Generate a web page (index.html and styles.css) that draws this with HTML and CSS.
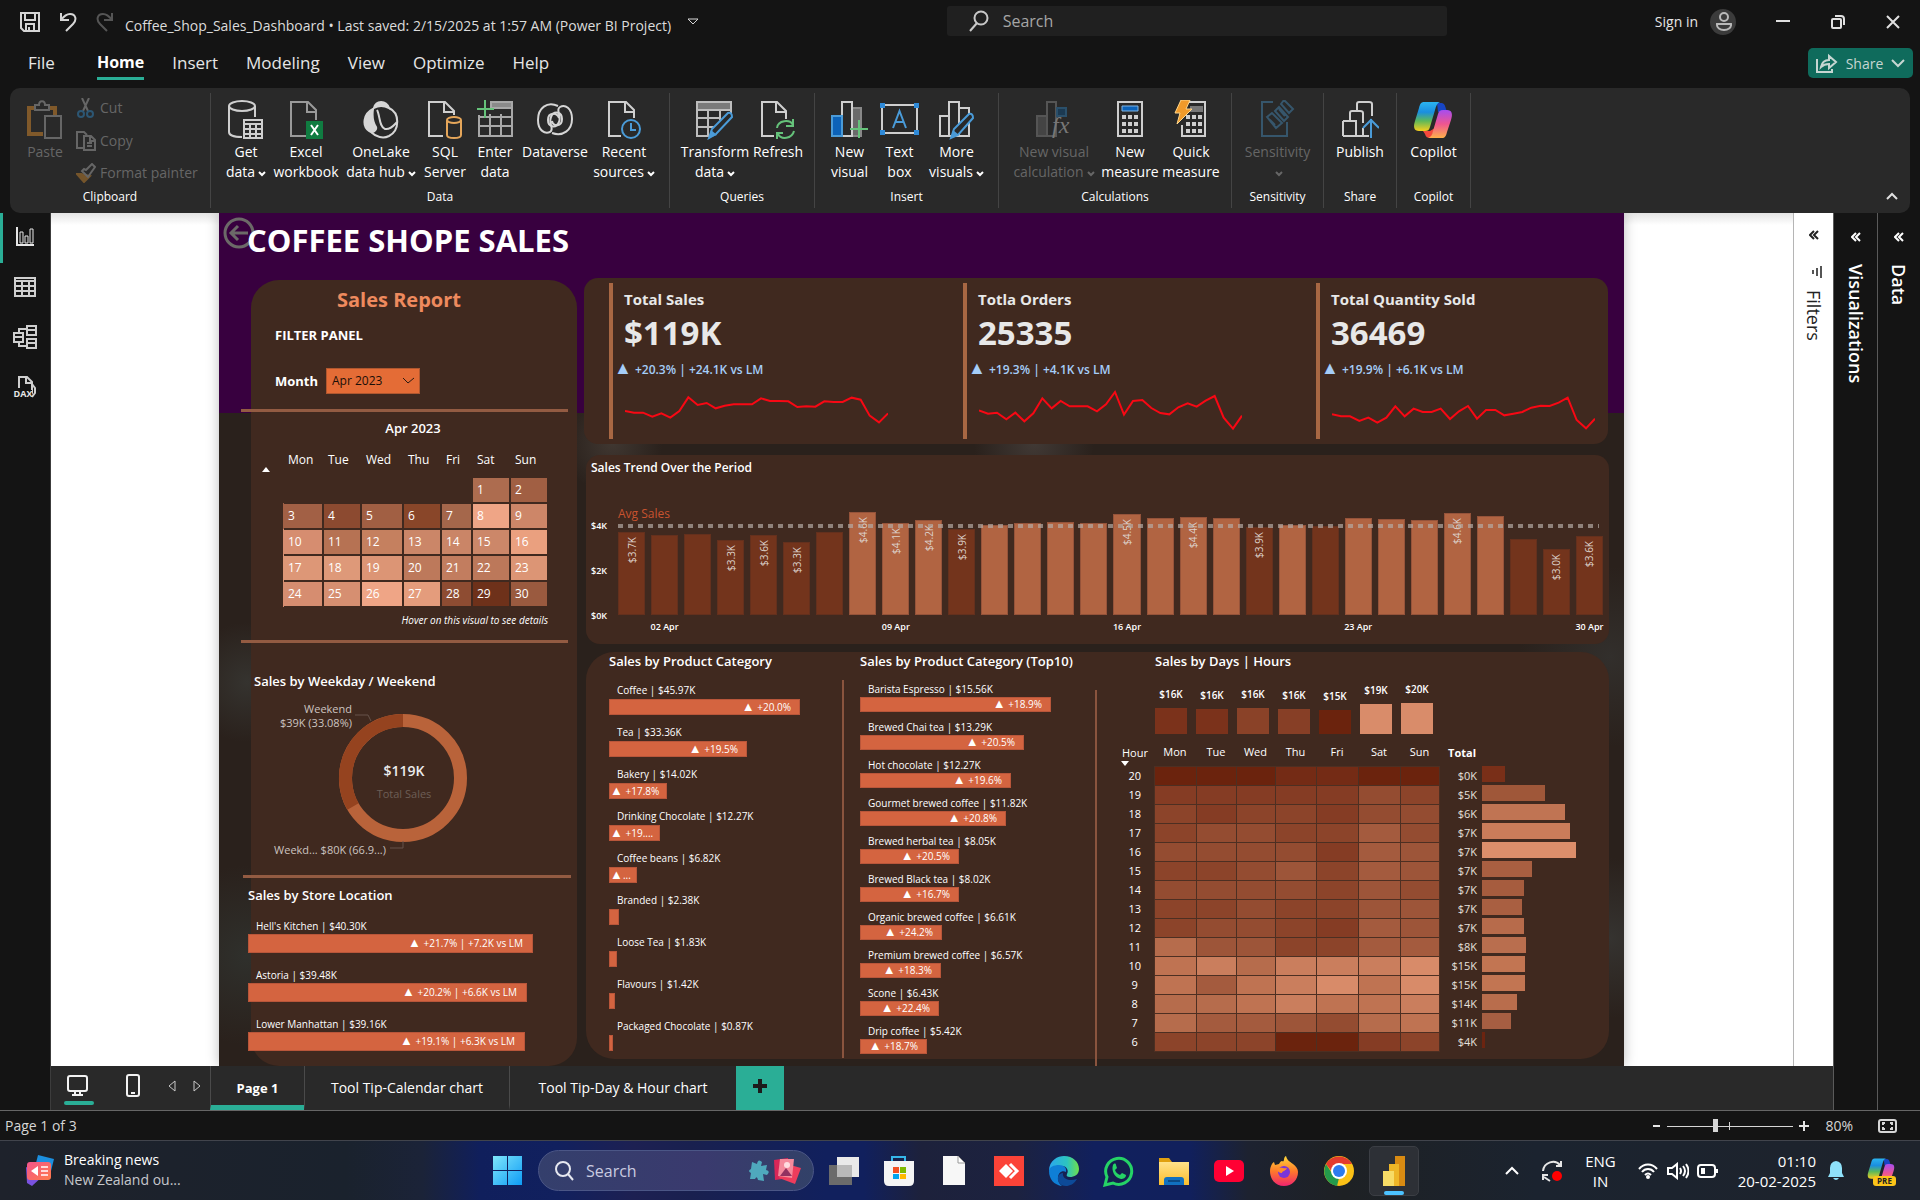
FILE: index.html
```html
<!DOCTYPE html>
<html lang="en">
<head>
<meta charset="utf-8">
<title>Coffee_Shop_Sales_Dashboard</title>
<link rel="stylesheet" href="styles.css">
</head>
<body>
<svg class="defs" width="0" height="0" aria-hidden="true">
  <defs>
    <linearGradient id="cpA" x1="0" y1="0" x2="0" y2="1"><stop offset="0" stop-color="#2bb4f0"/><stop offset=".35" stop-color="#1a8ee0"/><stop offset=".65" stop-color="#5cb85a"/><stop offset="1" stop-color="#f7cf1d"/></linearGradient>
    <linearGradient id="cpB" x1="0" y1="0" x2="0" y2="1"><stop offset="0" stop-color="#a64df0"/><stop offset=".5" stop-color="#ef5590"/><stop offset="1" stop-color="#ffb04a"/></linearGradient>
    <linearGradient id="win" x1="0" y1="0" x2="1" y2="1"><stop offset="0" stop-color="#7fe6fb"/><stop offset="1" stop-color="#0e9cf5"/></linearGradient>
    <linearGradient id="edge" x1="0" y1="0" x2="1" y2="0"><stop offset="0" stop-color="#2ba7ee"/><stop offset=".6" stop-color="#2cc4c0"/><stop offset="1" stop-color="#6fe04a"/></linearGradient>
    <linearGradient id="fox" x1="0" y1="0" x2="0" y2="1"><stop offset="0" stop-color="#ffd93a"/><stop offset=".5" stop-color="#ff7a2a"/><stop offset="1" stop-color="#f0246e"/></linearGradient>
    <linearGradient id="fold" x1="0" y1="0" x2="0" y2="1"><stop offset="0" stop-color="#ffe28a"/><stop offset="1" stop-color="#fbbd2c"/></linearGradient>
    <linearGradient id="news" x1="0" y1="0" x2="1" y2="1"><stop offset="0" stop-color="#f2548c"/><stop offset="1" stop-color="#ff7b4a"/></linearGradient>
    <symbol id="copilot" viewBox="0 0 40 40">
      <path d="M24 3h4c3 0 4 2 5 6l1 3h-9z" fill="#1745c4"/>
      <path d="M11 2h16c-3 1-4 4-5 8l-5 17c-1 3-2 4-5 4H6c-5 0-6-4-4-10L6 8c1-4 2-6 5-6z" fill="url(#cpA)"/>
      <path d="M10 31h7l5-3-4 10c-4 0-5-1-6-4z" fill="#f4483c"/>
      <path d="M29 38H15c3-1 4-3 5-7l5-17c1-3 2-4 5-4h4c5 0 6 4 4 10l-4 12c-1 4-2 6-5 6z" fill="url(#cpB)"/>
    </symbol>
    <symbol id="chev" viewBox="0 0 8 6"><path d="M1 1l3 3 3-3" fill="none" stroke="currentColor" stroke-width="2"/></symbol>
  </defs>
</svg>

<header class="titlebar">
  <div class="title-left">
    <button class="bare" aria-label="Save"><svg width="20" height="20" fill="none" stroke="#d6d6d6" stroke-width="2"><path d="M1 1h18v18H4l-3-3z"/><path d="M5 1v7h10V1M6 19v-7h8v7M9 15v4"/></svg></button>
    <button class="bare" aria-label="Undo"><svg width="18" height="20" fill="none" stroke="#d6d6d6" stroke-width="2"><path d="M2 1v7h8M2 8c3-4 6-6 9-6 6 0 7 6 3 10l-7 7"/></svg></button>
    <button class="bare" aria-label="Redo" disabled><svg width="18" height="20" fill="none" stroke="#555" stroke-width="2"><path d="M16 1v7H8M16 8c-3-4-6-6-9-6-6 0-7 6-3 10l7 7"/></svg></button>
    <h1>Coffee_Shop_Sales_Dashboard • Last saved: 2/15/2025 at 1:57 AM (Power BI Project)</h1>
    <button class="bare" aria-label="File options"><svg width="12" height="8" fill="none" stroke="#d6d6d6"><path d="M1 1h10L6 6z"/></svg></button>
  </div>
  <label class="search"><svg width="20" height="22" fill="none" stroke="#c8c8c8" stroke-width="2"><circle cx="12" cy="8" r="6.500"/><path d="M8 13l-7 8"/></svg><input type="text" placeholder="Search" aria-label="Search"></label>
  <div class="title-right">
    <button class="bare signin">Sign in <span class="avatar"><svg width="20" height="22" fill="none" stroke="#b9b9b9" stroke-width="2"><circle cx="10" cy="6" r="4"/><path d="M3 13h14c1 8-15 8-14 0z"/></svg></span></button>
    <button class="bare wbtn" aria-label="Minimize"><svg width="14" height="14"><path d="M0 6h14" stroke="#e0e0e0" stroke-width="2"/></svg></button>
    <button class="bare wbtn" aria-label="Restore"><svg width="14" height="14" fill="none" stroke="#e0e0e0" stroke-width="2"><rect x="1" y="4" width="9" height="9" rx="1"/><path d="M4 1h6q3 0 3 3v6"/></svg></button>
    <button class="bare wbtn" aria-label="Close"><svg width="14" height="14" stroke="#e0e0e0" stroke-width="2"><path d="M1 1l12 12M13 1L1 13"/></svg></button>
  </div>
</header>

<nav class="menu" aria-label="Ribbon tabs">
  <button class="first">File</button><button class="active">Home</button><button>Insert</button><button>Modeling</button><button>View</button><button>Optimize</button><button>Help</button>
  <button class="share"><svg width="22" height="20" fill="none" stroke="#c6d6d2" stroke-width="2"><path d="M1 6v13h15v-3M5 14c1-5 4-7 8-7V3l7 6-7 6v-4c-4 0-6 1-8 3z"/></svg>Share<svg width="14" height="9" fill="none" stroke="#c6d6d2" stroke-width="2"><path d="M1 1l6 6 6-6"/></svg></button>
</nav>

<section class="ribbon" aria-label="Ribbon">
  <div class="group g-clip">
    <div class="tools">
      <button class="tool" disabled><svg width="36" height="40" fill="none" stroke-width="2"><path d="M8 8H2v26h14" stroke="#80592a" stroke-width="4"/><path d="M22 8h6v7" stroke="#80592a" stroke-width="4"/><path d="M8 5h4c0-5 6-5 6 0h4v5H8z" stroke="#666" fill="#292929"/><path d="M18 16h16v22H18z" stroke="#666" fill="#292929"/></svg>Paste</button>
      <div class="small-tools">
        <button disabled><svg width="20" height="20" fill="none" stroke="#666" stroke-width="2"><path d="M6 0l6 13M13 0L7 13"/><circle cx="5" cy="16" r="3" stroke="#2c5673"/><circle cx="14" cy="16" r="3" stroke="#2c5673"/></svg>Cut</button>
        <button disabled><svg width="20" height="20" fill="none" stroke="#666" stroke-width="2"><path d="M7 17H1V1h7l3 3"/><path d="M8 5h7l4 4v10H8zM14 5v5h5M11 12h5M11 15h5"/></svg>Copy</button>
        <button disabled><svg width="20" height="20" fill="none" stroke="#666" stroke-width="2"><path d="M5 11L1 11l7 8 6-6z" fill="#75552b" stroke="#75552b"/><path d="M6 8l6 6 2-3 5-7-3-3-6 6-2-1z"/></svg>Format painter</button>
      </div>
    </div>
    <p>Clipboard</p>
  </div>
  <div class="group g-data">
    <div class="tools">
      <button class="tool"><svg width="36" height="40" fill="none" stroke="#cfcfcf" stroke-width="2"><ellipse cx="14" cy="6" rx="13" ry="5"/><path d="M1 6v26c0 3 5 5 13 5M27 6v11"/><path d="M16 20h18v18H16zM16 24h18M16 29h18M16 34h18M22 24v14M28 24v14"/></svg>Get<br>data<svg class="chev"><use href="#chev"/></svg></button>
      <button class="tool"><svg width="36" height="40" fill="none" stroke="#9a9a9a" stroke-width="2"><path d="M18 36H3V2h17l8 8v10M19 2v10h9"/><rect x="18" y="21" width="17" height="18" fill="#107c41" stroke="none"/><path d="M23 25l7 10M30 25l-7 10" stroke="#fff"/></svg>Excel<br>workbook</button>
      <button class="tool"><svg width="36" height="40" fill="none" stroke="#d6d6d6" stroke-width="2"><path d="M11 8C13 0 23 0 26 8c-6-3-10-3-15 0z" fill="#d6d6d6"/><path d="M10 9C0 14-1 26 6 31c4 3 8-1 7-4C9 21 9 16 10 9z" fill="#d6d6d6"/><path d="M26 8c11 5 11 22 0 28-6 3-13 1-18-4M14 10c3 5 2 17 8 19 6 1 9-4 12-7"/></svg>OneLake<br>data hub<svg class="chev"><use href="#chev"/></svg></button>
      <button class="tool"><svg width="36" height="40" fill="none" stroke="#cfcfcf" stroke-width="2"><path d="M16 36H2V2h16l9 9v4M17 2v10h9"/><g stroke="#e5a65a"><ellipse cx="27" cy="20" rx="7" ry="3"/><path d="M20 20v15c0 4 14 4 14 0V20"/></g></svg>SQL<br>Server</button>
      <button class="tool"><svg width="36" height="40" fill="none" stroke="#a8a8a8" stroke-width="2"><path d="M13 2h22v34H2V15M14 8h21M2 17h33M2 26h33M13 14v22M24 14v22"/><path d="M14 2h21v6H14z" fill="#8a8a8a"/><path d="M8 0v18M0 9h17" stroke="#65c27a"/></svg>Enter<br>data</button>
      <button class="tool"><svg width="36" height="40" fill="none" stroke="#d6d6d6" stroke-width="2"><path d="M21 6C10 1 1 8 1 20c0 11 7 14 12 12 5-3-2-8 1-15 3-7 11-5 11 2 0 8-9 8-10 2"/><path d="M15 33c11 4 20-3 20-14C35 8 28 4 23 7c-5 3 2 8-1 15-3 7-11 5-11-2 0-8 9-8 11-2"/></svg>Dataverse</button>
      <button class="tool"><svg width="36" height="40" fill="none" stroke="#cfcfcf" stroke-width="2"><path d="M15 36H3V2h17l8 8v8M19 2v10h9"/><g stroke="#4a9bd8"><circle cx="25" cy="29" r="9"/><path d="M25 23v7h5"/></g></svg>Recent<br>sources<svg class="chev"><use href="#chev"/></svg></button>
    </div>
    <p>Data</p>
  </div>
  <div class="group g-queries">
    <div class="tools">
      <button class="tool"><svg width="40" height="40" fill="none" stroke="#bdbdbd" stroke-width="2"><path d="M2 2h34v8H2z" fill="#7a7a7a"/><path d="M2 2v34h14M36 10v3M2 18h24M2 27h18M13 10v26M25 10v10"/><path d="M14 38l3-9 16-16q4-1 4 4L21 34z" stroke="#4a9bd8" fill="#292929"/><path d="M14 38l2-8 6 5z" fill="#4a9bd8" stroke="none"/></svg>Transform<br>data<svg class="chev"><use href="#chev"/></svg></button>
      <button class="tool"><svg width="36" height="40" fill="none" stroke="#cfcfcf" stroke-width="2"><path d="M14 36H2V2h15l9 9v8M16 2v10h9"/><g stroke="#65c27a"><path d="M17 28c1-8 13-9 16-3M33 19v7h-7M34 31c-2 8-13 9-16 3M17 39v-6h6"/></g></svg>Refresh</button>
    </div>
    <p>Queries</p>
  </div>
  <div class="group g-insert">
    <div class="tools">
      <button class="tool"><svg width="38" height="40" fill="none" stroke="#cfcfcf" stroke-width="2"><path d="M21 8h9v28h-9z" fill="#6a6a6a" stroke="#888"/><path d="M11 2h10v34H11z" fill="#292929"/><path d="M1 16h10v20H1z" fill="#0c62b8" stroke="#4a9bd8"/><path d="M28 20v18M19 29h18" stroke="#65c27a"/></svg>New<br>visual</button>
      <button class="tool"><svg width="40" height="40" fill="none" stroke="#cfcfcf" stroke-width="2"><path d="M2 5h35v28H2z"/><path d="M13 28L19.500 11 26 28M15 22h9" stroke="#4a9bd8"/><path d="M0 3h5v5H0zM34 3h5v5h-5zM0 30h5v5H0zM34 30h5v5h-5z" fill="#2f8ad8" stroke="none"/></svg>Text<br>box</button>
      <button class="tool"><svg width="38" height="40" fill="none" stroke="#cfcfcf" stroke-width="2"><path d="M2 16h9v20H2zM11 2h10v34H11zM21 8h10v28H21z"/><path d="M13 38l3-9 15-15q4-1 4 4L20 35z" stroke="#4a9bd8" fill="#292929"/><path d="M13 38l2-8 6 5z" fill="#4a9bd8" stroke="none"/></svg>More<br>visuals<svg class="chev"><use href="#chev"/></svg></button>
    </div>
    <p>Insert</p>
  </div>
  <div class="group g-calc">
    <div class="tools">
      <button class="tool" disabled><svg width="38" height="40" fill="none" stroke="#555" stroke-width="2"><path d="M2 16h10v20H2z" fill="#444"/><path d="M12 2h9v34h-9z"/><path d="M22 8h9v8h-9z" fill="#1c3a52" stroke="#2b506b"/><text x="17" y="33" font-family="Liberation Serif, serif" font-style="italic" font-size="24" fill="#777" stroke="none">fx</text></svg>New visual<br>calculation<svg class="chev"><use href="#chev"/></svg></button>
      <button class="tool"><svg width="28" height="40" fill="none" stroke="#cfcfcf" stroke-width="2"><path d="M2 2h24v34H2z"/><path d="M6 6h16v5H6z" fill="#0c62b8" stroke="#7fb4e4" stroke-width="1"/><path d="M6 17h16M6 24h16M6 31h16" stroke-width="4" stroke-dasharray="4 2"/></svg>New<br>measure</button>
      <button class="tool"><svg width="34" height="40" fill="none" stroke="#cfcfcf" stroke-width="2"><path d="M15 2h16v34H8V25"/><path d="M17 7h11v4H17z" fill="#777" stroke="#777"/><path d="M12 17h17M12 24h17M12 31h17" stroke-width="4" stroke-dasharray="4 2"/><path d="M7 0h9l-4 9h6L3 24l3-11H1z" fill="#f09a2a" stroke="#ffd68a" stroke-width="1"/></svg>Quick<br>measure</button>
    </div>
    <p>Calculations</p>
  </div>
  <div class="group g-sens">
    <div class="tools">
      <button class="tool" disabled><svg width="36" height="40" fill="none" stroke="#36566c" stroke-width="2"><path d="M14 2H3v34h25V22"/><path d="M8 17l5-4 10 10-6 5zM16 11l4-4 9 10-4 4zM22 4l3-4 9 9-4 4zM11 20l5 5M20 9l6 7"/></svg>Sensitivity<br><svg class="chev"><use href="#chev"/></svg></button>
    </div>
    <p>Sensitivity</p>
  </div>
  <div class="group g-pub">
    <div class="tools">
      <button class="tool"><svg width="38" height="40" fill="none" stroke="#cfcfcf" stroke-width="2"><path d="M2 21h13v15M2 36V21M2 36h26M9 20v-7q0-2 2-2h8q3 0 3 2v10M16 11V4q0-2 2-2h10q3 0 3 2v12M22 28v8"/><path d="M30 38V19M22 28l8-8 8 8" stroke="#4a9bd8"/></svg>Publish</button>
    </div>
    <p>Share</p>
  </div>
  <div class="group g-cop">
    <div class="tools">
      <button class="tool"><svg width="40" height="40"><use href="#copilot"/></svg>Copilot</button>
    </div>
    <p>Copilot</p>
  </div>
  <button class="bare collapse" aria-label="Collapse ribbon"><svg width="12" height="8" fill="none" stroke="#e0e0e0" stroke-width="2"><path d="M1 7l5-5 5 5"/></svg></button>
</section>

<main class="work">
  <nav class="rail" aria-label="Views">
    <button class="on" aria-label="Report view"><svg width="18" height="20" fill="none" stroke="#e6e6e6" stroke-width="2"><path d="M1 0v18h17"/><path d="M4 5h3v11H4zM9 9h3v7H9zM14 2h3v14h-3z" stroke-width="1"/></svg></button>
    <button aria-label="Table view"><svg width="22" height="20" fill="none" stroke="#cfcfcf" stroke-width="2"><path d="M1 1h20v18H1zM1 4h20M1 9h20M1 14h20M8 4v15M15 4v15"/></svg></button>
    <button aria-label="Model view"><svg width="24" height="24" fill="none" stroke="#cfcfcf" stroke-width="2"><path d="M1 8h9v9H1zM14 1h9v9h-9zM14 14h9v9h-9zM6 8V4h8M6 17v4h8M1 12h9M14 5h9M14 18h9"/></svg></button>
    <button class="dax" aria-label="DAX query view"><svg width="22" height="22" fill="none" stroke="#cfcfcf" stroke-width="2"><path d="M5 12V1h8l5 5v11l-2 3M12 1v6h6M18 8l3 4v5l-3 4"/></svg><span>DAX</span></button>
  </nav>

  <div class="center">
    <div class="stage">
      <div class="canvas">
        <article class="page">
          <header class="page-head">
            <button class="bare back" aria-label="Back"><svg width="32" height="32" fill="none" stroke="#6c6a68" stroke-width="3"><circle cx="16" cy="16" r="14"/><path d="M25 16H8M15 9l-7 7 7 7"/></svg></button>
            <h2>COFFEE SHOPE SALES</h2>
          </header>

          <aside class="panel">
            <h3 class="report">Sales Report</h3>
            <h4 class="filter">FILTER PANEL</h4>
            <div class="month">
              <label for="month">Month</label>
              <span class="pick"><select id="month"><option>Apr 2023</option></select><svg width="13" height="8" fill="none" stroke="#2a1a12"><path d="M1 1l5 5 6-5"/></svg></span>
            </div>
            <hr>
            <table class="cal">
              <caption>Apr 2023</caption>
              <colgroup><col class="c31"><col class="c40"><col class="c38"><col class="c42"><col class="c38"><col class="c31"><col class="c38"><col class="c38"></colgroup>
              <thead><tr><th class="sort"><i class="up"></i></th><th>Mon</th><th>Tue</th><th>Wed</th><th>Thu</th><th>Fri</th><th>Sat</th><th>Sun</th></tr></thead>
              <tbody>
              <tr><td></td><td></td><td></td><td></td><td></td><td></td><td style="background:#ad6c4f">1</td><td style="background:#a15f43">2</td></tr>
              <tr><td></td><td style="background:#a26045">3</td><td style="background:#8c4a30">4</td><td style="background:#a15f43">5</td><td style="background:#894629">6</td><td style="background:#a5674b">7</td><td style="background:#efa586">8</td><td style="background:#cd8668">9</td></tr>
              <tr><td></td><td style="background:#d68d70">10</td><td style="background:#b67253">11</td><td style="background:#c5805f">12</td><td style="background:#cb8668">13</td><td style="background:#ca8567">14</td><td style="background:#cc8769">15</td><td style="background:#eaa07f">16</td></tr>
              <tr><td></td><td style="background:#dd9777">17</td><td style="background:#de9979">18</td><td style="background:#dc9575">19</td><td style="background:#bd795b">20</td><td style="background:#c27d5f">21</td><td style="background:#bc785a">22</td><td style="background:#dc9575">23</td></tr>
              <tr><td></td><td style="background:#d68d70">24</td><td style="background:#d68f71">25</td><td style="background:#efa586">26</td><td style="background:#e49c7c">27</td><td style="background:#8e4c32">28</td><td style="background:#6e311a">29</td><td style="background:#9a5a3f">30</td></tr>
              </tbody>
            </table>
            <p class="note">Hover on this visual to see details</p>
            <hr>
            <h4 class="weekend">Sales by Weekday / Weekend</h4>
            <svg class="donut" viewBox="0 0 326 170" width="326" height="170">
              <circle cx="152" cy="84" r="57.500" fill="none" stroke="#b9633a" stroke-width="13"/>
              <path d="M152 26.500A57.500 57.500 0 0 0 102 112.500" fill="none" stroke="#95431f" stroke-width="13"/>
              <path d="M104 21h13l3 6M139 154h13v-7" fill="none" stroke="#66534a"/>
              <text x="101" y="19" text-anchor="end">Weekend</text>
              <text x="101" y="33" text-anchor="end">$39K (33.08%)</text>
              <text x="135" y="160" text-anchor="end">Weekd... $80K (66.9...)</text>
              <text class="big" x="153" y="82" text-anchor="middle">$119K</text>
              <text class="dim" x="153" y="104" text-anchor="middle">Total Sales</text>
            </svg>
            <hr class="last">
            <section class="stores">
              <h4>Sales by Store Location</h4>
              <ul class="bars">
                <li>Hell's Kitchen | $40.30K<div style="width:285px"><i>▲</i> +21.7% | +7.2K vs LM</div></li>
                <li>Astoria | $39.48K<div style="width:279px"><i>▲</i> +20.2% | +6.6K vs LM</div></li>
                <li>Lower Manhattan | $39.16K<div style="width:277px"><i>▲</i> +19.1% | +6.3K vs LM</div></li>
              </ul>
            </section>
          </aside>

          <div class="charts">
            <section class="kpis">
              <div class="kpi"><h3>Total Sales</h3><strong>$119K</strong><p><i>▲</i> +20.3% | +24.1K vs LM</p>
                <svg viewBox="0 351 789 156" width="263" height="52"><polyline points="0,423 27,428 54,428 82,440 109,430 136,443 163,423 190,382 218,405 245,399 272,415 299,407 326,403 354,403 381,403 408,385 435,393 462,393 490,394 517,411 544,409 571,410 598,394 626,396 653,396 680,383 707,389 734,437 762,457 789,430"/></svg></div>
              <div class="kpi"><h3>Totla Orders</h3><strong>25335</strong><p><i>▲</i> +19.3% | +4.1K vs LM</p>
                <svg viewBox="0 351 789 156" width="263" height="52"><polyline points="0,421 27,431 54,428 82,448 109,428 136,454 163,430 190,385 218,415 245,393 272,409 299,409 326,409 354,424 381,403 408,366 435,434 462,393 490,390 517,414 544,429 571,433 598,412 626,400 653,410 680,392 707,378 734,443 762,476 789,437"/></svg></div>
              <div class="kpi"><h3>Total Quantity Sold</h3><strong>36469</strong><p><i>▲</i> +19.9% | +6.1K vs LM</p>
                <svg viewBox="0 351 789 156" width="263" height="52"><polyline points="0,433 27,439 54,439 82,453 109,443 136,458 163,443 190,409 218,439 245,416 272,426 299,426 326,416 354,447 381,424 408,408 435,446 462,420 490,420 517,436 544,431 571,426 598,413 626,407 653,408 680,398 707,383 734,450 762,475 789,446"/></svg></div>
            </section>

            <section class="trend">
              <h4>Sales Trend Over the Period</h4>
              <div class="plotrow">
                <div class="yaxis"><span>$4K</span><span>$2K</span><span>$0K</span></div>
                <div class="plot">
                  <span class="avg">Avg Sales</span>
                  <i class="lo" style="height:83px"><b>$3.7K</b></i><i class="lo" style="height:80px"></i><i class="lo" style="height:81px"></i><i class="lo" style="height:75px"><b>$3.3K</b></i><i class="lo" style="height:80px"><b>$3.6K</b></i><i class="lo" style="height:73px"><b>$3.3K</b></i><i class="lo" style="height:83px"></i><i style="height:103px"><b>$4.6K</b></i><i style="height:92px"><b>$4.1K</b></i><i style="height:95px"><b>$4.2K</b></i><i class="lo" style="height:86px"><b>$3.9K</b></i><i style="height:90px"></i><i style="height:92px"></i><i style="height:93px"></i><i style="height:92px"></i><i style="height:101px"><b>$4.5K</b></i><i style="height:97px"></i><i style="height:98px"><b>$4.4K</b></i><i style="height:97px"></i><i class="lo" style="height:88px"><b>$3.9K</b></i><i style="height:90px"></i><i class="lo" style="height:89px"></i><i style="height:97px"></i><i style="height:96px"></i><i style="height:95px"></i><i style="height:102px"><b>$4.6K</b></i><i style="height:99px"></i><i class="lo" style="height:76px"></i><i class="lo" style="height:66px"><b>$3.0K</b></i><i class="lo" style="height:79px"><b>$3.6K</b></i>
                  <span class="avgline"></span>
                </div>
              </div>
              <div class="xaxis"><span class="d2">02 Apr</span><span class="d9">09 Apr</span><span class="d16">16 Apr</span><span class="d23">23 Apr</span><span class="d30">30 Apr</span></div>
            </section>

            <section class="details">
              <div class="cat">
                <h4>Sales by Product Category</h4>
                <ul class="bars">
                  <li>Coffee | $45.97K<div style="width:191px"><i>▲</i> +20.0%</div></li>
                  <li>Tea | $33.36K<div style="width:138px"><i>▲</i> +19.5%</div></li>
                  <li>Bakery | $14.02K<div style="width:58px"><i>▲</i> +17.8%</div></li>
                  <li>Drinking Chocolate | $12.27K<div style="width:51px"><i>▲</i> +19....</div></li>
                  <li>Coffee beans | $6.82K<div style="width:28px"><i>▲</i>...</div></li>
                  <li>Branded | $2.38K<div class="tiny" style="width:10px"></div></li>
                  <li>Loose Tea | $1.83K<div class="tiny" style="width:8px"></div></li>
                  <li>Flavours | $1.42K<div class="tiny" style="width:6px"></div></li>
                  <li>Packaged Chocolate | $0.87K<div class="tiny" style="width:4px"></div></li>
                </ul>
              </div>
              <span class="divider"></span>
              <div class="top10">
                <h4>Sales by Product Category (Top10)</h4>
                <ul class="bars">
                  <li>Barista Espresso | $15.56K<div style="width:191px"><i>▲</i> +18.9%</div></li>
                  <li>Brewed Chai tea | $13.29K<div style="width:164px"><i>▲</i> +20.5%</div></li>
                  <li>Hot chocolate | $12.27K<div style="width:151px"><i>▲</i> +19.6%</div></li>
                  <li>Gourmet brewed coffee | $11.82K<div style="width:146px"><i>▲</i> +20.8%</div></li>
                  <li>Brewed herbal tea | $8.05K<div style="width:99px"><i>▲</i> +20.5%</div></li>
                  <li>Brewed Black tea | $8.02K<div style="width:99px"><i>▲</i> +16.7%</div></li>
                  <li>Organic brewed coffee | $6.61K<div style="width:82px"><i>▲</i> +24.2%</div></li>
                  <li>Premium brewed coffee | $6.57K<div style="width:81px"><i>▲</i> +18.3%</div></li>
                  <li>Scone | $6.43K<div style="width:79px"><i>▲</i> +22.4%</div></li>
                  <li>Drip coffee | $5.42K<div style="width:67px"><i>▲</i> +18.7%</div></li>
                </ul>
              </div>
              <span class="divider long"></span>
              <div class="hours">
                <h4>Sales by Days | Hours</h4>
                <div class="days">
                  <span>$16K<i style="height:26px;background:#7b321b"></i></span><span>$16K<i style="height:25px;background:#7b321b"></i></span><span>$16K<i style="height:26px;background:#8a4228"></i></span><span>$16K<i style="height:25px;background:#873f26"></i></span><span>$15K<i style="height:24px;background:#6b230d"></i></span><span>$19K<i style="height:30px;background:#d98c6a"></i></span><span>$20K<i style="height:31px;background:#d98c6a"></i></span>
                </div>
                <table class="heat">
                  <colgroup><col class="c57"><col class="c42"><col class="c40"><col class="c39"><col class="c41"><col class="c42"><col class="c42"><col class="c39"><col class="c43"><col></colgroup>
                  <thead><tr><th class="hr">Hour<i class="down"></i></th><th>Mon</th><th>Tue</th><th>Wed</th><th>Thu</th><th>Fri</th><th>Sat</th><th>Sun</th><th class="tot">Total</th><th></th></tr></thead>
                  <tbody>
                  <tr><th>20</th><td class="h0"></td><td class="h0"></td><td class="h0"></td><td class="h1"></td><td class="h1"></td><td class="h0"></td><td class="h0"></td><td class="sum">$0K</td><td class="bar"><i style="width:23px;background:#792f18"></i></td></tr>
                  <tr><th>19</th><td class="h2"></td><td class="h2"></td><td class="h2"></td><td class="h2"></td><td class="h2"></td><td class="h4"></td><td class="h3"></td><td class="sum">$5K</td><td class="bar"><i style="width:63px;background:#9f5739"></i></td></tr>
                  <tr><th>18</th><td class="h3"></td><td class="h2"></td><td class="h3"></td><td class="h3"></td><td class="h2"></td><td class="h4"></td><td class="h4"></td><td class="sum">$6K</td><td class="bar"><i style="width:83px;background:#c07453"></i></td></tr>
                  <tr><th>17</th><td class="h3"></td><td class="h4"></td><td class="h4"></td><td class="h3"></td><td class="h3"></td><td class="h6"></td><td class="h4"></td><td class="sum">$7K</td><td class="bar"><i style="width:88px;background:#ca7c5a"></i></td></tr>
                  <tr><th>16</th><td class="h4"></td><td class="h4"></td><td class="h4"></td><td class="h4"></td><td class="h2"></td><td class="h6"></td><td class="h5"></td><td class="sum">$7K</td><td class="bar"><i style="width:94px;background:#dc8e6b"></i></td></tr>
                  <tr><th>15</th><td class="h3"></td><td class="h3"></td><td class="h4"></td><td class="h5"></td><td class="h3"></td><td class="h6"></td><td class="h5"></td><td class="sum">$7K</td><td class="bar"><i style="width:50px;background:#a95f41"></i></td></tr>
                  <tr><th>14</th><td class="h4"></td><td class="h4"></td><td class="h4"></td><td class="h4"></td><td class="h3"></td><td class="h5"></td><td class="h4"></td><td class="sum">$7K</td><td class="bar"><i style="width:42px;background:#a65c3e"></i></td></tr>
                  <tr><th>13</th><td class="h3"></td><td class="h3"></td><td class="h4"></td><td class="h3"></td><td class="h3"></td><td class="h5"></td><td class="h5"></td><td class="sum">$7K</td><td class="bar"><i style="width:40px;background:#a95f41"></i></td></tr>
                  <tr><th>12</th><td class="h3"></td><td class="h4"></td><td class="h4"></td><td class="h3"></td><td class="h2"></td><td class="h6"></td><td class="h5"></td><td class="sum">$7K</td><td class="bar"><i style="width:42px;background:#b76b4b"></i></td></tr>
                  <tr><th>11</th><td class="h7"></td><td class="h5"></td><td class="h5"></td><td class="h3"></td><td class="h3"></td><td class="h6"></td><td class="h6"></td><td class="sum">$8K</td><td class="bar"><i style="width:44px;background:#b96e4e"></i></td></tr>
                  <tr><th>10</th><td class="h8"></td><td class="h9"></td><td class="h7"></td><td class="h9"></td><td class="h9"></td><td class="h9"></td><td class="h10"></td><td class="sum">$15K</td><td class="bar"><i style="width:43px;background:#c27552"></i></td></tr>
                  <tr><th>9</th><td class="h8"></td><td class="h6"></td><td class="h8"></td><td class="h9"></td><td class="h10"></td><td class="h8"></td><td class="h10"></td><td class="sum">$15K</td><td class="bar"><i style="width:43px;background:#c27552"></i></td></tr>
                  <tr><th>8</th><td class="h7"></td><td class="h7"></td><td class="h8"></td><td class="h9"></td><td class="h8"></td><td class="h8"></td><td class="h9"></td><td class="sum">$14K</td><td class="bar"><i style="width:35px;background:#b96d4c"></i></td></tr>
                  <tr><th>7</th><td class="h7"></td><td class="h6"></td><td class="h6"></td><td class="h5"></td><td class="h4"></td><td class="h7"></td><td class="h8"></td><td class="sum">$11K</td><td class="bar"><i style="width:29px;background:#a65e42"></i></td></tr>
                  <tr><th>6</th><td class="h3"></td><td class="h3"></td><td class="h3"></td><td class="h0"></td><td class="h0"></td><td class="h2"></td><td class="h3"></td><td class="sum">$4K</td><td class="bar"><i style="width:3px;background:#6c2410"></i></td></tr>
                  </tbody>
                </table>
              </div>
            </section>
          </div>
        </article>
      </div>
      <aside class="filters">
        <button class="bare" aria-label="Expand filters"><svg width="10" height="10" fill="none" stroke="#222" stroke-width="2"><path d="M5 1L1 5l4 4M9 1L5 5l4 4"/></svg></button>
        <svg class="funnel" width="12" height="12" stroke="#555" stroke-width="2"><path d="M11 0v12M7 2v8M3 4v4"/></svg>
        <span>Filters</span>
      </aside>
    </div>
    <footer class="pagetabs">
      <button class="bare desk" aria-label="Desktop layout"><svg width="22" height="22" fill="none" stroke="#f2f2f2" stroke-width="2"><rect x="1" y="1" width="19" height="15" rx="2"/><path d="M8 16v4M13 16v4M5 20h11"/></svg></button>
      <button class="bare phone" aria-label="Mobile layout"><svg width="14" height="24" fill="none" stroke="#f2f2f2" stroke-width="2"><rect x="1" y="1" width="12" height="21" rx="2"/><path d="M5 19h4"/></svg></button>
      <button class="bare prev" aria-label="Previous page"><svg width="8" height="12" fill="none" stroke="#c8c8c8"><path d="M7 1v10L1 6z"/></svg></button>
      <button class="bare next" aria-label="Next page"><svg width="8" height="12" fill="none" stroke="#c8c8c8"><path d="M1 1v10l6-5z"/></svg></button>
      <button class="tab current">Page 1</button>
      <button class="tab t2">Tool Tip-Calendar chart</button>
      <button class="tab t3">Tool Tip-Day &amp; Hour chart</button>
      <button class="add" aria-label="New page"><svg width="14" height="14" stroke="#1c1c1c" stroke-width="4"><path d="M7 0v14M0 7h14"/></svg></button>
    </footer>
  </div>

  <aside class="pane"><button class="bare" aria-label="Expand"><svg width="10" height="10" fill="none" stroke="#fff" stroke-width="2"><path d="M5 1L1 5l4 4M9 1L5 5l4 4"/></svg></button><span>Visualizations</span></aside>
  <aside class="pane narrow"><button class="bare" aria-label="Expand"><svg width="10" height="10" fill="none" stroke="#fff" stroke-width="2"><path d="M5 1L1 5l4 4M9 1L5 5l4 4"/></svg></button><span>Data</span></aside>
</main>

<div class="status">
  <span class="where">Page 1 of 3</span>
  <button class="bare" aria-label="Zoom out"><svg width="8" height="14"><path d="M0 7h7" stroke="#e6e6e6" stroke-width="2"/></svg></button>
  <input type="range" min="0" max="100" value="38" aria-label="Zoom">
  <button class="bare" aria-label="Zoom in"><svg width="10" height="14"><path d="M0 7h10M5 2v10" stroke="#e6e6e6" stroke-width="2"/></svg></button>
  <span class="pct">80%</span>
  <button class="bare" aria-label="Fit to page"><svg width="20" height="14" fill="none" stroke="#d6d6d6" stroke-width="2"><rect x="1" y="1" width="17" height="12" rx="2"/><path d="M7 4H5v2M5 8v2h2M12 4h2v2M14 8v2h-2"/></svg></button>
</div>

<footer class="taskbar">
  <div class="widgets">
    <svg width="32" height="34"><path d="M14 2l16 4-4 16-16-4z" fill="#1c8fe0"/><path d="M2 14l18 8-12 11-5-3z" fill="#7a52e0"/><rect x="3" y="9" width="24" height="18" rx="3" fill="url(#news)"/><path d="M7 18l7-5v10z" fill="#fff"/><path d="M17 14h7M17 18h7M17 22h7" stroke="#ffd9d9" stroke-width="2"/></svg>
    <div><b>Breaking news</b><span>New Zealand ou...</span></div>
  </div>
  <div class="apps">
    <button class="bare app start" aria-label="Start"><svg width="30" height="30"><path d="M0 0h14v14H0zM15 0h14v14H15zM0 15h14v14H0zM15 15h14v14H15z" fill="url(#win)"/></svg></button>
    <label class="tsearch"><svg width="20" height="20" fill="none" stroke="#e6e8f0" stroke-width="2"><circle cx="9" cy="8" r="7"/><path d="M14 13l5 6"/></svg><input type="text" placeholder="Search" aria-label="Taskbar search">
      <svg width="54" height="30"><path d="M3 6l5 2q1-6 5-2l-1 4 6-1-1 5q5 1 1 5l-4-1 1 7-6-1q-1-5-3-1l-5 0 1-6q-4-2 0-4z" fill="#4fa9bd"/><path d="M25 4l14-2 2 20-15 2z" fill="#d92658"/><path d="M34 7l18 5-6 16-16-6z" fill="#ee3c5c"/><path d="M31 3h14l-2 19-14-2z" fill="#f58a9c"/><circle cx="38" cy="9" r="3" fill="#ffdce0"/><path d="M31 20l6-8 6 8z" fill="#933261"/></svg></label>
    <button class="bare app" aria-label="Task view"><svg width="32" height="32"><path d="M1 10h23v20H1z" fill="#6b6b6b"/><path d="M9 2h22v20H9z" fill="#e9e9e9"/><path d="M9 10h15v12H9z" fill="#b9b9b9"/></svg></button>
    <button class="bare app" aria-label="Store"><svg width="32" height="32"><path d="M9 6V2h13v4" fill="none" stroke="#35b6ea" stroke-width="2"/><path d="M1 6h30v20q0 5-5 5H6q-5 0-5-5z" fill="#f4f4f4"/><path d="M10 12h6v6h-6z" fill="#f25022"/><path d="M17 12h6v6h-6z" fill="#7fba00"/><path d="M10 19h6v5h-6z" fill="#00a4ef"/><path d="M17 19h6v5h-6z" fill="#ffb900"/></svg></button>
    <button class="bare app" aria-label="Document"><svg width="24" height="32"><path d="M1 1h15l7 7v22H1z" fill="#f7f7f7"/><path d="M16 1v7h7z" fill="#fff" stroke="#999"/></svg></button>
    <button class="bare app" aria-label="AnyDesk"><svg width="30" height="30"><path d="M0 0h30v30H0z" fill="#fb4338"/><path d="M5 15l7-7 7 7-7 7z" fill="#fff"/><path d="M16 8l7 7-7 7" fill="none" stroke="#fff" stroke-width="3"/></svg></button>
    <button class="bare app" aria-label="Edge"><svg width="32" height="32"><path d="M1 16C1 5 10 1 16 1c9 0 15 6 15 13 0 6-5 8-9 8-3 0-4-1-3-3 2-3 0-8-5-8C7 11 2 14 1 16z" fill="url(#edge)"/><path d="M1 16c0-4 5-6 10-6 5 0 8 3 7 7-4-2-8 1-8 6 0 3 1 6 4 8C6 30 1 24 1 16z" fill="#0f7fd6"/><path d="M18 31c-6 0-9-5-8-9 1-3 3-4 5-4-1 5 5 9 14 6-3 5-7 7-11 7z" fill="#0d4a98"/></svg></button>
    <button class="bare app" aria-label="WhatsApp"><svg width="32" height="32"><path d="M2 30l2-8A13 13 0 1 1 10 28z" fill="#14204f" stroke="#25d366" stroke-width="3"/><path d="M10 10c1-2 3-2 3 0l1 3-2 2c1 3 3 4 5 5l2-2 4 2c0 3-3 4-5 4-6-1-10-8-8-14z" fill="#25d366"/></svg></button>
    <button class="bare app" aria-label="File Explorer"><svg width="32" height="32"><path d="M1 3h10l3 4v6H1z" fill="#e0a010"/><path d="M1 7h30v23H1z" fill="url(#fold)"/><path d="M6 30v-5q0-3 3-3h14q3 0 3 3v5z" fill="#1170c0"/><path d="M10 26h12" stroke="#0b4a86" stroke-width="2"/></svg></button>
    <button class="bare app" aria-label="YouTube"><svg width="32" height="32"><rect x="1" y="5" width="30" height="22" rx="5" fill="#ff0033"/><path d="M13 11l8 5-8 5z" fill="#fff"/></svg></button>
    <button class="bare app" aria-label="Firefox"><svg width="32" height="32"><path d="M16 31C7 31 2 24 2 16c0-4 2-8 4-9l1 3 4-1c1-2 2-3 3-3 3 2 1-4 4-5 1 4 3 5 7 8 3 2 5 5 5 8 0 8-6 14-14 14z" fill="url(#fox)"/><circle cx="16" cy="17" r="6" fill="#7a35d8"/><path d="M9 14c4-3 6 0 10-1-1 3-5 3-5 5-3 0-5-2-5-4z" fill="#ff8b2c"/></svg></button>
    <button class="bare app" aria-label="Chrome"><svg width="32" height="32"><circle cx="16" cy="16" r="15" fill="#fbc116"/><path d="M3 9A15 15 0 0 1 29 9H16z" fill="#e33b2e"/><path d="M3 9l7 11 6 3-2 8A15 15 0 0 1 3 9z" fill="#249a4b"/><path d="M3 9l13-1-6 10z" fill="#e33b2e"/><circle cx="16" cy="16" r="8" fill="#fff"/><circle cx="16" cy="16" r="6" fill="#2d7bee"/></svg></button>
    <button class="bare app on" aria-label="Power BI"><svg width="24" height="32"><path d="M13 1h10v30H13z" fill="#d98b12"/><path d="M7 9h10v22H7z" fill="#eeb627"/><path d="M1 16h11v15H1z" fill="#f7dc66"/></svg></button>
  </div>
  <div class="tray">
    <button class="bare" aria-label="Show hidden icons"><svg width="14" height="10" fill="none" stroke="#fff" stroke-width="2"><path d="M1 8l6-6 6 6"/></svg></button>
    <svg class="sync" width="22" height="22" fill="none" stroke="#e6e6e6" stroke-width="2"><path d="M2 11C3 2 14-1 19 5M20 1v5h-5M2 20v-5h5M3 17l6 4"/><circle cx="16" cy="16" r="5" fill="#f00" stroke="none"/></svg>
    <span class="lang">ENG<br>IN</span>
    <svg width="20" height="16" fill="none" stroke="#fff" stroke-width="2"><path d="M1 6c5-6 13-6 18 0M4 9c3-4 9-4 12 0M7 12c2-2 4-2 6 0"/><circle cx="10" cy="14" r="2" fill="#fff" stroke="none"/></svg>
    <svg class="vol" width="22" height="18" fill="none" stroke="#fff" stroke-width="2"><path d="M1 6h4l5-4v14l-5-4H1zM13 6q2 3 0 6M16 4q4 5 0 10M19 2q5 7 0 14"/></svg>
    <svg class="bat" width="22" height="14" fill="none" stroke="#fff" stroke-width="2"><rect x="1" y="1" width="17" height="12" rx="3"/><path d="M20 5v4"/><path d="M4 4h4v6H4z" fill="#fff" stroke="none"/></svg>
    <span class="clock">01:10<br>20-02-2025</span>
    <svg class="bell" width="16" height="20" fill="#8fe2fb"><path d="M8 0q6 1 6 7v5l2 4H0l2-4V7q0-6 6-7zM5 17h6q-3 4-6 0z"/></svg>
    <span class="pre"><svg width="30" height="28"><use href="#copilot"/></svg><b>PRE</b></span>
  </div>
</footer>
</body>
</html>
```
FILE: styles.css
```css
* { box-sizing: border-box; }
body {
  margin: 0;
  min-height: 100vh;
  display: flex;
  flex-direction: column;
  background: #141414;
  color: #e6e6e6;
  font: 14px/20px "Open Sans", "Noto Sans", sans-serif;
}
h1, h2, h3, h4, p, ul { margin: 0; padding: 0; font-weight: 400; }
ul { list-style: none; }
button, input, select { font: inherit; color: inherit; }
button { border: 0; background: none; padding: 0; }
svg { flex: none; }
.defs { position: absolute; }
.bare { display: flex; align-items: center; justify-content: center; }

/* title bar */
.titlebar { display: grid; grid-template-columns: 2fr 500px 1fr; height: 42px; }
.title-left { display: flex; align-items: center; padding-left: 20px; }
.title-left .bare { margin-right: 19px; }
.title-left h1 { font-size: 14px; line-height: 20px; white-space: nowrap; margin: 7px 16px 0 -8px; color: #dcdcdc; }
.search { display: flex; align-items: center; height: 30px; margin-top: 6px; padding-left: 22px; gap: 14px; background: #202020; border-radius: 3px; }
.search input, .tsearch input { border: 0; background: none; padding: 0; outline: 0; flex: 1; min-width: 0; font-size: 16px; }
.search input::placeholder { color: #a6a6a6; }
.title-right { display: flex; justify-content: flex-end; align-items: center; }
.signin { gap: 12px; margin-right: 19px; }
.avatar { display: flex; align-items: center; justify-content: center; width: 26px; height: 26px; border-radius: 50%; background: #3b3b3b; }
.avatar svg { width: 18px; }
.wbtn { width: 55px; height: 44px; }

.menu { display: flex; gap: 28px; height: 46px; padding: 6px 7px 0 28px; font-size: 17px; }
.menu button { height: 32px; line-height: 29px; border-bottom: 3px solid transparent; }
.menu .first { margin-right: 14px; }
.menu .active { font-weight: 700; font-size: 16px; color: #fff; border-color: #2aae96; }
.menu .share { margin-left: auto; display: flex; align-items: center; justify-content: center; gap: 8px; width: 105px; height: 30px; border: 0; border-radius: 5px; background: #0f6b5c; color: #c6d6d2; font-size: 14px; }

/* ribbon */
.ribbon { display: flex; margin: 0 10px; padding: 5px 0; height: 125px; background: #292929; border-radius: 10px; }
.group { display: flex; flex-direction: column; justify-content: space-between; align-items: center; border-right: 1px solid #444; color: #fff; }
.group p { font-size: 12px; line-height: 22px; }
.tools { display: grid; padding-top: 5px; }
.tool { display: block; white-space: nowrap; line-height: 20px; text-align: center; align-self: start; justify-self: center; }
.tool > svg:first-child { display: block; margin: 2px auto; }
.tool:disabled, .small-tools button:disabled { color: #666; }
.chev { width: 8px; height: 6px; margin-left: 3px; }
.g-clip { width: 201px; }
.g-clip .tools { grid-template-columns: 62px 130px; }
.small-tools { display: grid; grid-template-rows: 32px 33px 32px; margin: -6px 0 -6px; }
.small-tools button { display: flex; align-items: center; gap: 4px; white-space: nowrap; }
.g-data { width: 459px; } .g-data .tools { grid-template-columns: 48px 72px 78px 50px 50px 70px 68px; }
.g-queries { width: 145px; } .g-queries .tools { grid-template-columns: 72px 54px; }
.g-insert { width: 184px; } .g-insert .tools { grid-template-columns: 48px 52px 62px; }
.g-calc { width: 233px; } .g-calc .tools { grid-template-columns: 90px 62px 60px; }
.g-sens { width: 92px; } .g-pub { width: 73px; } .g-cop { width: 74px; }
.collapse { margin-left: auto; width: 36px; align-self: flex-end; height: 24px; }

/* work area */
.work { flex: 1; display: flex; }
.rail { width: 51px; border-right: 1px solid #3c3c3c; display: flex; flex-direction: column; }
.rail button { height: 50px; display: flex; align-items: center; justify-content: center; border-left: 3px solid transparent; padding: 0 3px 3px 0; }
.rail .on { border-color: #2aae96; }
.dax { flex-direction: column; }
.dax span { font-size: 9px; line-height: 8px; font-weight: 700; margin: -8px 4px 0 0; background: #141414; }
.center { flex: 1; display: flex; flex-direction: column; min-width: 0; }
.stage { flex: 1; display: flex; background: #fff; }
.canvas { flex: 1; display: flex; padding: 0 169px 0 168px; background: linear-gradient(#e4e4e4, #fff 12px); }
.page {
  flex: 1;
  display: grid;
  grid-template: 65px auto / 326px 1fr;
  column-gap: 7px;
  padding: 0 15px 0 32px;
  box-shadow: 0 0 12px #0004;
  clip-path: inset(0 -14px);
  background:
    linear-gradient(#38003f, #38003f) 0 0 / 100% 200px no-repeat,
    radial-gradient(circle at 2% 55%, #35332f 0, transparent 60px),
    radial-gradient(circle at 2% 87%, #2f302c 0, transparent 90px),
    radial-gradient(circle at 28% 27%, #403731 0, transparent 50px),
    radial-gradient(circle at 58% 27%, #413935 0, transparent 60px),
    radial-gradient(circle at 99% 52%, #322f2c 0, transparent 90px),
    radial-gradient(circle at 99% 85%, #353330 0, transparent 80px),
    #2a211c;
}
.page-head { grid-column: 1 / -1; display: flex; align-items: flex-start; margin-left: -28px; color: #fff; }
.page-head h2 { font-size: 31px; line-height: 54px; font-weight: 700; margin-left: -8px; }
.back { margin-top: 4px; }

.panel { margin-top: 2px; background: #40291f; border-radius: 28px; padding-bottom: 14px; color: #fff; }
.report { font-size: 20px; line-height: 40px; font-weight: 700; color: #ee8a5e; text-align: center; padding-right: 30px; }
.filter { font-size: 13px; line-height: 30px; font-weight: 700; padding-left: 24px; }
.month { display: flex; align-items: center; gap: 10px; padding: 18px 0 15px 24px; }
.month label { font-size: 13px; font-weight: 700; width: 41px; }
.pick { position: relative; width: 94px; }
.pick select { appearance: none; display: block; width: 100%; height: 26px; padding: 0 5px; border: 1px solid #b0572f; border-radius: 0; background: #e46c36; color: #1a0f08; font-size: 12px; }
.pick svg { position: absolute; right: 5px; top: 9px; }
.panel hr { height: 3px; margin: 0 9px 0 -10px; border: 0; background: #935b42; }
table { border-collapse: collapse; table-layout: fixed; }
.c31 { width: 31px; } .c38 { width: 38px; } .c39 { width: 39px; } .c40 { width: 40px; }
.c41 { width: 41px; } .c42 { width: 42px; } .c43 { width: 43px; } .c57 { width: 57px; }
.cal { width: 298px; font-size: 12px; line-height: 24px; }
.cal caption { font-size: 13px; line-height: 32px; font-weight: 600; padding-left: 26px; }
.cal th { height: 33px; padding: 0 0 0 5px; font-weight: 400; text-align: left; }
.cal td { height: 26px; padding: 0 0 0 4px; border: 2px solid #40291f; }
.cal td:first-child { border-color: transparent; }
.up, .down { display: block; width: 0; border: 5px solid transparent; }
.cal .up { border-width: 0 4px 5px; border-bottom-color: #fff; margin: 18px 0 0 5px; }
.note { font-size: 10px; line-height: 24px; font-style: italic; width: 297px; text-align: right; margin-bottom: 8px; }
.panel h4.weekend, .stores h4, .trend h4, .details h4 { font-weight: 600; font-size: 13px; }
.panel .weekend { line-height: 24px; padding: 26px 0 1px 3px; }
.donut { display: block; font-size: 11px; fill: #ccc4c0; }
.donut .big { font-size: 14px; font-weight: 600; fill: #ececec; }
.donut .dim { fill: #6d5e56; }
.panel hr.last { margin: 11px 6px 0 -8px; }
.stores { margin-left: -3px; }
.stores h4 { line-height: 34px; padding-bottom: 6px; }

.bars li { font-size: 10px; text-indent: 8px; white-space: nowrap; line-height: 16px; color: #fff; }
.bars div { text-indent: 0; text-align: right; padding-right: 8px; background: #d46440; border: 1px solid #b9563a; }
.bars i { font-style: normal; font-size: 13px; line-height: 10px; }
.bars .tiny { padding: 0; }
.stores .bars div { height: 19px; line-height: 17px; margin-bottom: 14px; padding-right: 9px; }
.stores .bars li:last-child div { margin-bottom: 0; }

.charts { display: flex; flex-direction: column; min-width: 0; }
.kpis, .trend, .details { background: #40291f; }
.kpis { display: grid; grid-template-columns: 354fr 353fr 292fr; height: 166px; margin-right: 1px; padding: 5px 0 5px 25px; border-radius: 14px; }
.kpi { border-left: 4px solid #a86743; padding-left: 11px; color: #e8e8e8; }
.kpi h3 { font-size: 15px; line-height: 32px; font-weight: 700; }
.kpi strong { display: block; font-size: 33px; line-height: 36px; }
.kpi p { height: 36px; font-size: 12px; line-height: 38px; font-weight: 600; color: #a5cdf8; margin-left: -10px; }
.kpi p i { font-style: normal; font-size: 18px; line-height: 20px; }
.kpi svg { display: block; margin-left: 1px; }
.kpi polyline { fill: none; stroke: #f80814; stroke-width: 6; }

.trend { margin: 11px 0 8px 2px; height: 189px; padding: 0 6px 0 5px; border-radius: 14px; color: #fff; }
.trend h4 { font-size: 12px; line-height: 25px; }
.plotrow { display: flex; height: 135px; }
.yaxis { width: 27px; margin-bottom: -9px; display: flex; flex-direction: column; justify-content: flex-end; gap: 29px; font-size: 9px; line-height: 16px; font-weight: 600; }
.plot { flex: 1; position: relative; display: grid; grid-template-columns: repeat(30, 1fr); column-gap: 6px; align-items: end; }
.plot i { background: #b16442; border: 1px solid #95533a; font-style: normal; display: flex; justify-content: center; min-width: 0; }
.plot i.lo { background: #73341c; border-color: #64301d; }
.plot b { writing-mode: vertical-rl; transform: rotate(180deg); font-size: 10px; line-height: 14px; font-weight: 400; color: #ddd2cb; align-self: flex-start; margin-top: 4px; }
.avg { position: absolute; top: 24px; left: 0; font-size: 12px; color: #c8532f; }
.avgline { position: absolute; left: 0; right: 4px; bottom: 87px; height: 4px; background: repeating-linear-gradient(90deg, #b4aaa4b0 0 5px, transparent 5px 10px); }
.xaxis { display: grid; grid-template-columns: repeat(30, 1fr); column-gap: 6px; margin-left: 27px; font-size: 9px; font-weight: 600; line-height: 23px; white-space: nowrap; }
.xaxis span { justify-self: center; width: 31px; margin: 0 -2px; text-align: center; }
.d2 { grid-column: 2; } .d9 { grid-column: 9; } .d16 { grid-column: 16; } .d23 { grid-column: 23; } .d30 { grid-column: 30; }

.details { display: grid; grid-template-columns: 233px 2px 251px 2px 1fr; margin-left: 2px; height: 407px; padding-left: 23px; border-radius: 28px; color: #fff; }
.details h4 { line-height: 18px; white-space: nowrap; }
.divider { margin: 28px 0 3px; background: #8a543e; }
.divider.long { margin: 38px 0 -7px; }
.cat .bars, .top10 .bars { margin-top: 11px; }
.cat li { line-height: 18px; }
.cat .bars div { height: 16px; line-height: 14px; margin-bottom: 8px; }
.top10 { padding-left: 16px; }
.top10 .bars div { height: 15px; line-height: 13px; margin-bottom: 7px; }
.hours h4 { padding-left: 58px; }
.days { display: flex; gap: 9px; height: 64px; align-items: flex-end; padding-left: 58px; font-size: 10px; line-height: 14px; font-weight: 600; }
.days span { width: 32px; text-align: center; }
.days i { display: block; margin-top: 7px; }
.heat { width: 100%; font-size: 11px; line-height: 17px; }
.heat th, .heat td { padding: 0; font-weight: 400; height: 19px; }
.heat thead th { height: 32px; padding-top: 4px; }
.heat tbody th, .heat .hr { padding-left: 19px; }
.heat .hr { position: relative; }
.heat .down { position: absolute; left: 24px; bottom: 0; border-width: 5px 4px 0; border-top-color: #fff; }
.heat .tot { font-weight: 700; text-align: right; padding-right: 6px; }
.heat .sum { text-align: right; padding-right: 5px; color: #e6e0dc; }
.heat td[class^="h"] { border: 1px solid #4d2f22; }
.heat .bar i { display: block; height: 16px; margin-bottom: 3px; }
.h0 { background: #6b230d; } .h1 { background: #742b15; } .h2 { background: #853c24; } .h3 { background: #8c442a; }
.h4 { background: #944c31; } .h5 { background: #9d5539; } .h6 { background: #a45b3e; } .h7 { background: #b66c4c; }
.h8 { background: #bf7352; } .h9 { background: #ca7e5d; } .h10 { background: #d88b69; }

.filters { width: 40px; border-left: 1px solid #b5b5b5; color: #222; display: flex; flex-direction: column; align-items: center; }
.filters .bare { height: 24px; margin-top: 10px; }
.funnel { margin: 19px 0 12px 4px; }
.filters span, .pane span { writing-mode: vertical-rl; font-size: 18px; line-height: 24px; }
.pane { width: 44px; border-left: 1px solid #5a5a5a; display: flex; flex-direction: column; align-items: center; padding-top: 12px; color: #fff; }
.pane.narrow { width: 43px; }
.pane .bare { height: 24px; margin-bottom: 15px; }
.pane span { font-weight: 600; }

.pagetabs { display: flex; height: 44px; background: #292929; }
.pagetabs > .bare { height: 40px; }
.desk { width: 54px; position: relative; }
.desk::after { content: ""; position: absolute; left: 13px; bottom: 1px; width: 30px; height: 4px; border-radius: 2px; background: #2aae96; }
.phone { width: 56px; }
.prev { width: 22px; }
.next { width: 27px; }
.tab { border-left: 1px solid #4a4a4a; color: #fff; border-bottom: 5px solid transparent; padding-top: 5px; }
.tab.current { width: 94px; font-weight: 700; font-size: 13px; border-bottom-color: #2aae96; }
.t2 { width: 205px; }
.t3 { width: 227px; }
.add { width: 48px; display: flex; align-items: center; justify-content: center; padding-bottom: 4px; background: #2aae96; }

/* status bar */
.status { display: flex; align-items: center; height: 30px; border-top: 1px solid #666; padding: 0 22px 0 5px; color: #d6d6d6; }
.where { margin-right: auto; }
.status input { appearance: none; width: 126px; height: 16px; margin: 0 6px; background: linear-gradient(#d6d6d6, #d6d6d6) 62px 4px / 1px 8px no-repeat, linear-gradient(#d6d6d6, #d6d6d6) 0 8px / 100% 1px no-repeat; }
.status input::-webkit-slider-thumb { appearance: none; width: 5px; height: 13px; background: #d6d6d6; }
.pct { margin: 0 25px 0 16px; }

/* taskbar */
.taskbar {
  display: grid;
  grid-template-columns: 1fr auto 1fr;
  align-items: center;
  height: 60px;
  border-top: 1px solid #41444c;
  color: #fff;
  background: linear-gradient(90deg, #1e222b 0, #1a222d 18%, #1b2338 22%, #101f5c 25%, #11205e 29%, #1d2052 33%, #19204f 36%, #11205d 43%, #11205d 45%, #1d213b 48%, #1c2240 53%, #11205d 57%, #11205c 62%, #1d2230 65%, #1e2124 70%, #1b232f 80%, #1e232c 100%);
}
.widgets { display: flex; align-items: center; padding-left: 24px; gap: 8px; margin-top: -1px; }
.widgets b { display: block; font-weight: 400; }
.widgets span { color: #c6c8cc; }
.apps { display: flex; align-items: center; padding-right: 8px; }
.app { width: 50px; height: 50px; margin-right: 5px; }
.app.start { width: 30px; margin-right: 15px; }
.app.on { position: relative; background: #2d3036; border: 1px solid #3b3e44; border-radius: 5px; margin-right: 0; }
.app.on::after { content: ""; position: absolute; left: 14px; bottom: 0; width: 20px; height: 4px; border-radius: 2px; background: #4cc2ff; }
.tsearch { display: flex; align-items: center; width: 276px; height: 41px; padding: 0 10px 0 15px; gap: 12px; margin-right: 5px; border-radius: 21px; border: 1px solid #4b5686; background: linear-gradient(90deg, #343f6c, #3a3a6e 60%, #324168); }
.tsearch input::placeholder { color: #c9cbe0; }
.tray { display: flex; align-items: center; justify-content: flex-end; padding-right: 24px; }
.sync { margin-left: 22px; }
.lang { text-align: center; margin: 0 22px; }
.vol { margin-left: 9px; }
.bat { margin: 0 19px 0 8px; }
.lang, .clock { font-size: 15px; line-height: 20px; }
.clock { text-align: right; }
.bell { margin: 0 22px 0 12px; }
.pre { position: relative; width: 30px; height: 28px; }
.pre svg { display: block; }
.pre b { position: absolute; left: 7px; top: 19px; width: 23px; border-radius: 3px; background: #fcc419; color: #222; font-size: 8px; line-height: 10px; text-align: center; }
```
